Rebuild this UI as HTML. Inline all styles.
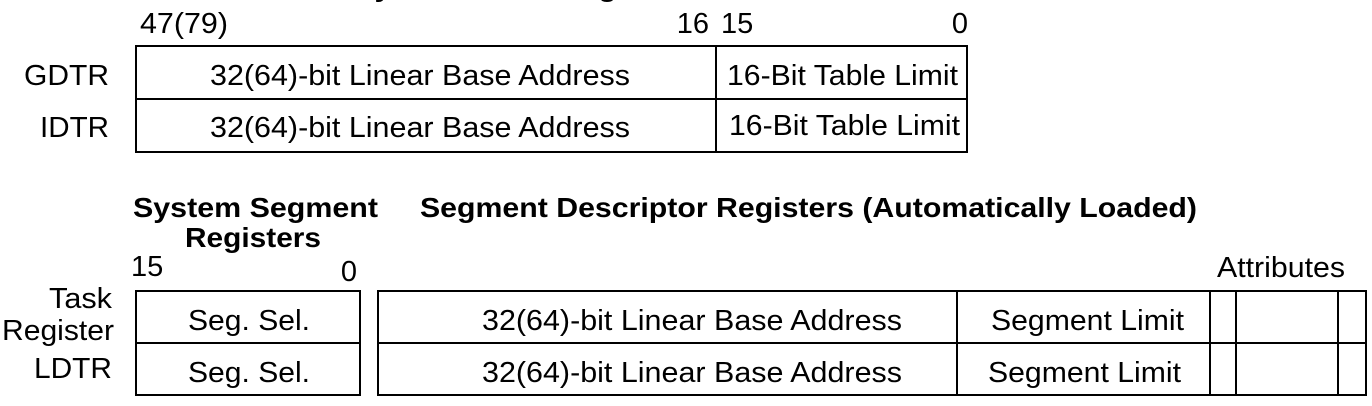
<!DOCTYPE html><html><head><style>body{margin:0;background:#fff}svg{display:block}text{font-family:"Liberation Sans",Arial,sans-serif;font-size:29px;fill:#000}.b{font-weight:bold;font-size:28px}</style></head><body>
<svg width="1372" height="406" viewBox="0 0 1372 406">
<text x="354" y="-4" class="b" textLength="345" lengthAdjust="spacingAndGlyphs">System Table Registers</text>
<text x="140" y="33" textLength="88" lengthAdjust="spacingAndGlyphs">47(79)</text>
<text x="709" y="33" text-anchor="end">16</text>
<text x="721" y="33">15</text>
<text x="968" y="33" text-anchor="end">0</text>
<g fill="none" stroke="#000" stroke-width="2">
<rect x="136" y="46" width="831" height="106"/>
<line x1="136" y1="99" x2="967" y2="99"/>
<line x1="716" y1="46" x2="716" y2="152"/>
<rect x="136" y="291" width="224" height="104"/>
<line x1="136" y1="343" x2="360" y2="343"/>
<rect x="378" y="291" width="988" height="104"/>
<line x1="378" y1="343" x2="1366" y2="343"/>
<line x1="957" y1="291" x2="957" y2="395"/>
<line x1="1210" y1="291" x2="1210" y2="395"/>
<line x1="1236" y1="291" x2="1236" y2="395"/>
<line x1="1338" y1="291" x2="1338" y2="395"/>
</g>
<text x="24" y="85" textLength="85" lengthAdjust="spacingAndGlyphs">GDTR</text>
<text x="40" y="137" textLength="69" lengthAdjust="spacingAndGlyphs">IDTR</text>
<text x="210" y="85" textLength="420" lengthAdjust="spacingAndGlyphs">32(64)-bit Linear Base Address</text>
<text x="210" y="137" textLength="420" lengthAdjust="spacingAndGlyphs">32(64)-bit Linear Base Address</text>
<text x="727" y="85" textLength="231" lengthAdjust="spacingAndGlyphs">16-Bit Table Limit</text>
<text x="729" y="135" textLength="231" lengthAdjust="spacingAndGlyphs">16-Bit Table Limit</text>
<text x="133" y="217" class="b" textLength="245" lengthAdjust="spacingAndGlyphs">System Segment</text>
<text x="185" y="247" class="b" textLength="136" lengthAdjust="spacingAndGlyphs">Registers</text>
<text x="420" y="217" class="b" textLength="777" lengthAdjust="spacingAndGlyphs">Segment Descriptor Registers (Automatically Loaded)</text>
<text x="131" y="276">15</text>
<text x="357" y="281" text-anchor="end">0</text>
<text x="1217" y="277" textLength="128" lengthAdjust="spacingAndGlyphs">Attributes</text>
<text x="49" y="308" textLength="63" lengthAdjust="spacingAndGlyphs">Task</text>
<text x="2" y="340" textLength="112" lengthAdjust="spacingAndGlyphs">Register</text>
<text x="34" y="378" textLength="78" lengthAdjust="spacingAndGlyphs">LDTR</text>
<text x="188" y="330" textLength="122" lengthAdjust="spacingAndGlyphs">Seg. Sel.</text>
<text x="188" y="382" textLength="122" lengthAdjust="spacingAndGlyphs">Seg. Sel.</text>
<text x="482" y="330" textLength="420" lengthAdjust="spacingAndGlyphs">32(64)-bit Linear Base Address</text>
<text x="482" y="382" textLength="420" lengthAdjust="spacingAndGlyphs">32(64)-bit Linear Base Address</text>
<text x="991" y="330" textLength="193" lengthAdjust="spacingAndGlyphs">Segment Limit</text>
<text x="988" y="382" textLength="193" lengthAdjust="spacingAndGlyphs">Segment Limit</text>
</svg></body></html>
